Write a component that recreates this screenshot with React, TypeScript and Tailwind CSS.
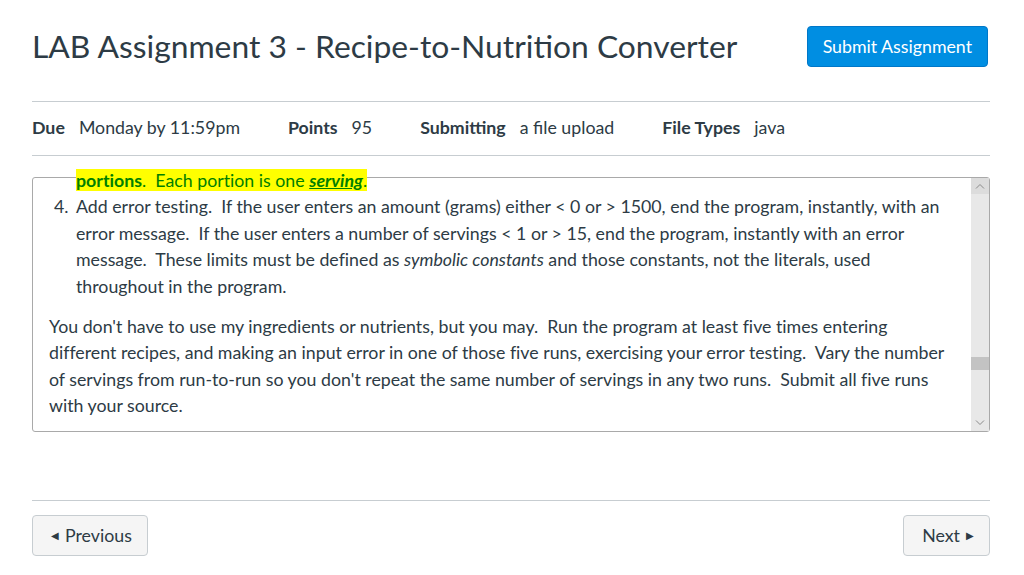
import React from 'react';

const font = { fontFamily: 'Lato, "Open Sans", sans-serif' };

function DetailItem({ label, value }: { label: string; value: string }) {
    return (
        <div className="flex items-baseline gap-[14px]">
            <span className="font-bold">{label}</span>
            <span>{value}</span>
        </div>
    );
}

function FakeScrollbar() {
    return (
        <div className="flex w-[18px] flex-col bg-[#e8e8e8]">
            <div className="flex h-[16px] items-center justify-center bg-[#dcdcdc]">
                <svg width="10" height="6" viewBox="0 0 10 6" fill="none">
                    <path d="M1 5.5 L5 1.5 L9 5.5" stroke="#8a8a8a" strokeWidth="1" />
                </svg>
            </div>
            <div className="h-[163px]" />
            <div className="h-[13px] bg-[#c3c3c3]" />
            <div className="flex-1" />
            <div className="flex h-[16px] items-center justify-center">
                <svg width="10" height="6" viewBox="0 0 10 6" fill="none">
                    <path d="M1 0.5 L5 4.5 L9 0.5" stroke="#8a8a8a" strokeWidth="1" />
                </svg>
            </div>
        </div>
    );
}

export default function App() {
    return (
        <div className="min-h-[575px] bg-white pl-[32px] pr-[34px] pt-[26px] text-[#2d3b45]" style={font}>
            {/* Header */}
            <div className="flex items-start justify-between">
                <h1 className="text-[31.8px] leading-[40px] font-normal">
                    LAB Assignment 3 - Recipe-to-Nutrition Converter
                </h1>
                <button className="mr-[2px] h-[41px] rounded-[4px] border border-[#0077c8] bg-[#008ee2] px-[15px] text-[17.75px] text-white">
                    Submit Assignment
                </button>
            </div>

            {/* Details */}
            <div className="mt-[34px] flex h-[55px] items-center gap-[48px] border-y border-[#c7cdd1] pb-[3px] text-[17.75px]">
                <DetailItem label="Due" value="Monday by 11:59pm" />
                <DetailItem label="Points" value="95" />
                <DetailItem label="Submitting" value="a file upload" />
                <DetailItem label="File Types" value="java" />
            </div>

            {/* Description frame */}
            <div className="mt-[21px] flex h-[255px] rounded-[3px] border border-[#a9a9a9]">
                <div className="flex-1 pl-[16px] pr-[20px] text-[17.75px] leading-[26.4px] [font-variant-ligatures:none]">
                    <div className="-mt-[11px] pl-[27px]">
                        <span className="bg-[#ffff00] text-[#008000]">
                            <strong>portions</strong>.&nbsp; Each portion is one{' '}
                            <em className="font-bold underline">serving</em>.
                        </span>
                    </div>
                    <ol start={4} className="list-none">
                        <li className="flex">
                            <span className="w-[27px] pl-[5px]">4.</span>
                            <span className="flex-1">
                                Add error testing.&nbsp; If the user enters an amount (grams) either &lt; 0 or &gt; 1500, end the program, instantly, with an error message.&nbsp; If the user enters a number of servings &lt; 1 or &gt; 15, end the program, instantly with an error message.&nbsp; These limits must be defined as <em>symbolic constants</em> and those constants, not the literals, used throughout in the program.
                            </span>
                        </li>
                    </ol>
                    <p className="mt-[14px]">
                        You don't have to use my ingredients or nutrients, but you may.&nbsp; Run the program at least five times entering different recipes, and making an input error in one of those five runs, exercising your error testing.&nbsp; Vary the number of servings from run-to-run so you don't repeat the same number of servings in any two runs.&nbsp; Submit all five runs with your source.
                    </p>
                </div>
                <FakeScrollbar />
            </div>

            {/* Footer */}
            <div className="mt-[68px] flex justify-between border-t border-[#c7cdd1] pt-[14px]">
                <button className="flex h-[41px] items-center gap-[6px] rounded-[4px] border border-[#c7cdd1] bg-[#f5f5f5] pl-[18px] pr-[15px] text-[17.75px]">
                    <span className="text-[10px]">◀</span>
                    Previous
                </button>
                <button className="flex h-[41px] items-center gap-[6px] rounded-[4px] border border-[#c7cdd1] bg-[#f5f5f5] pl-[18px] pr-[15px] text-[17.75px]">
                    Next
                    <span className="text-[10px]">▶</span>
                </button>
            </div>
        </div>
    );
}
